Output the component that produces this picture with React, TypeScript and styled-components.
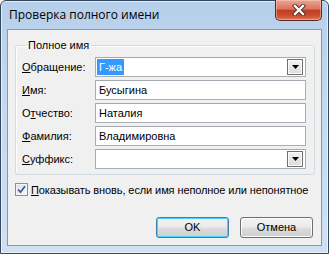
import React from 'react';
import styled, { createGlobalStyle } from 'styled-components';

const GlobalStyle = createGlobalStyle`
  html, body {
    margin: 0;
    padding: 0;
    background: #ffffff;
  }
  body {
    font-family: "Liberation Sans", Arial, sans-serif;
    font-size: 11px;
    color: #000;
  }
`;

// окно с рамкой Aero
const Window = styled.div`
  box-sizing: border-box;
  width: 329px;
  height: 254px;
  border: 1px solid #34475e;
  border-radius: 6px 6px 0 0;
  background: linear-gradient(to bottom, #b6cfea 0%, #c4d9ef 40%, #cfe0f2 100%);
  box-shadow: inset 0 0 0 1px rgba(255, 255, 255, 0.6);
  padding: 0 6px 7px 6px;
  display: flex;
  flex-direction: column;
`;

const TitleBar = styled.div`
  height: 28px;
  display: flex;
  align-items: flex-start;
  flex-shrink: 0;
`;

const TitleText = styled.div`
  font-family: "Open Sans", "Noto Sans", sans-serif;
  font-size: 12px;
  line-height: 16px;
  padding: 6px 0 0 2px;
  color: #000;
`;

const CloseButton = styled.div`
  box-sizing: border-box;
  margin-left: auto;
  margin-top: -1px;
  width: 47px;
  height: 21px;
  border: 1px solid #5b2a22;
  border-top: none;
  border-radius: 0 0 5px 5px;
  background: linear-gradient(to bottom, #e9a795 0%, #db735b 45%, #c23d22 52%, #cc4e33 80%, #df7b5f 100%);
  box-shadow: inset 0 0 0 1px rgba(255, 215, 200, 0.45);
  display: flex;
  align-items: center;
  justify-content: center;
`;

// клиентская область
const Client = styled.div`
  flex: 1;
  border: 1px solid #8299b3;
  background: #f0f0f0;
  padding: 9px 6px 0 7px;
  display: flex;
  flex-direction: column;
`;

const Group = styled.fieldset`
  margin: 0;
  padding: 5px 8px 5px 6px;
  border: 1px solid #d0dae1;
  border-radius: 3px;
  box-shadow: inset 1px 1px 0 #fff;
`;

const Legend = styled.legend`
  padding: 0 2px;
  margin-left: 4px;
  line-height: 13px;
  font-size: 11px;
`;

const FormGrid = styled.div`
  display: grid;
  grid-template-columns: 73px 1fr;
  grid-auto-rows: 20px;
  row-gap: 3px;
  align-items: center;
`;

const Label = styled.label`
  line-height: 13px;
  white-space: nowrap;
`;

const Key = styled.span`
  text-decoration: underline;
  text-underline-offset: 1px;
`;

const Field = styled.div`
  box-sizing: border-box;
  height: 20px;
  border: 1px solid #abadb3;
  border-top-color: #a5a8b0;
  background: #fff;
  display: flex;
  align-items: center;
  padding: 1px 2px 1px 1px;
`;

const FieldText = styled.span<{ selected?: boolean }>`
  height: 16px;
  line-height: 16px;
  padding: 0 2px;
  background: ${p => (p.selected ? '#3399ff' : 'transparent')};
  color: ${p => (p.selected ? '#fff' : '#000')};
`;

const DropButton = styled.div`
  box-sizing: border-box;
  margin-left: auto;
  width: 16px;
  height: 16px;
  border: 1px solid #707070;
  background: linear-gradient(to bottom, #f2f2f2 0%, #e6e6e6 50%, #dcdcdc 100%);
  box-shadow: inset 0 0 0 1px #fcfcfc;
  display: flex;
  align-items: center;
  justify-content: center;
`;

const CheckRow = styled.div`
  margin-top: 8px;
  display: flex;
  align-items: center;
  gap: 3px;
  height: 13px;
`;

const CheckLabel = styled.span`
  letter-spacing: -0.1px;
`;

const CheckBox = styled.div`
  box-sizing: border-box;
  width: 13px;
  height: 13px;
  border: 1px solid #8e8f8f;
  background: linear-gradient(135deg, #dcdcdc 0%, #fbfbfb 100%);
  box-shadow: inset 0 0 0 1px #f4f4f4;
  display: flex;
  align-items: center;
  justify-content: center;
`;

const Buttons = styled.div`
  margin-top: 21px;
  margin-right: 2px;
  display: flex;
  justify-content: flex-end;
  gap: 11px;
`;

const Button = styled.div<{ primary?: boolean }>`
  box-sizing: border-box;
  width: 73px;
  height: 21px;
  border: 1px solid ${p => (p.primary ? '#3c7fb1' : '#707070')};
  border-radius: 3px;
  background: linear-gradient(to bottom, #f2f2f2 0%, #ebebeb 48%, #dddddd 52%, #cfcfcf 100%);
  box-shadow: inset 0 0 0 1px ${p => (p.primary ? '#48d4f8' : '#fcfcfc')};
  display: flex;
  align-items: center;
  justify-content: center;
  line-height: 13px;
`;

const Arrow = () => (
  <svg width="7" height="4" viewBox="0 0 7 4">
    <path d="M0 0 H7 L3.5 4 Z" fill="#000" />
  </svg>
);

const rows = [
  { key: 'О', rest: 'бращение:', pre: '', value: 'Г-жа', combo: true, selected: true },
  { key: 'И', rest: 'мя:', pre: '', value: 'Бусыгина' },
  { key: 'т', rest: 'чество:', pre: 'О', value: 'Наталия' },
  { key: 'Ф', rest: 'амилия:', pre: '', value: 'Владимировна' },
  { key: 'С', rest: 'уффикс:', pre: '', value: '', combo: true },
];

export default function App() {
  return (
    <>
      <GlobalStyle />
      <Window>
        <TitleBar>
          <TitleText>Проверка полного имени</TitleText>
          <CloseButton>
            <svg width="14" height="12" viewBox="0 0 14 12">
              <path d="M3 2 L11 10 M11 2 L3 10" stroke="#4a2a26" strokeWidth="4.2" strokeLinecap="square" />
              <path d="M3 2 L11 10 M11 2 L3 10" stroke="#ffffff" strokeWidth="2.4" strokeLinecap="square" />
            </svg>
          </CloseButton>
        </TitleBar>
        <Client>
          <Group>
            <Legend>Полное имя</Legend>
            <FormGrid>
              {rows.map(r => (
                <React.Fragment key={r.rest}>
                  <Label>
                    {r.pre}
                    <Key>{r.key}</Key>
                    {r.rest}
                  </Label>
                  <Field>
                    {r.value && <FieldText selected={r.selected}>{r.value}</FieldText>}
                    {r.combo && (
                      <DropButton>
                        <Arrow />
                      </DropButton>
                    )}
                  </Field>
                </React.Fragment>
              ))}
            </FormGrid>
          </Group>
          <CheckRow>
            <CheckBox>
              <svg width="9" height="9" viewBox="0 0 9 9">
                <path d="M1 4.5 L3.5 7.2 L8 1.2" fill="none" stroke="#3d5aa0" strokeWidth="1.8" />
              </svg>
            </CheckBox>
            <CheckLabel>
              <Key>П</Key>оказывать вновь, если имя неполное или непонятное
            </CheckLabel>
          </CheckRow>
          <Buttons>
            <Button primary>OK</Button>
            <Button>Отмена</Button>
          </Buttons>
        </Client>
      </Window>
    </>
  );
}
